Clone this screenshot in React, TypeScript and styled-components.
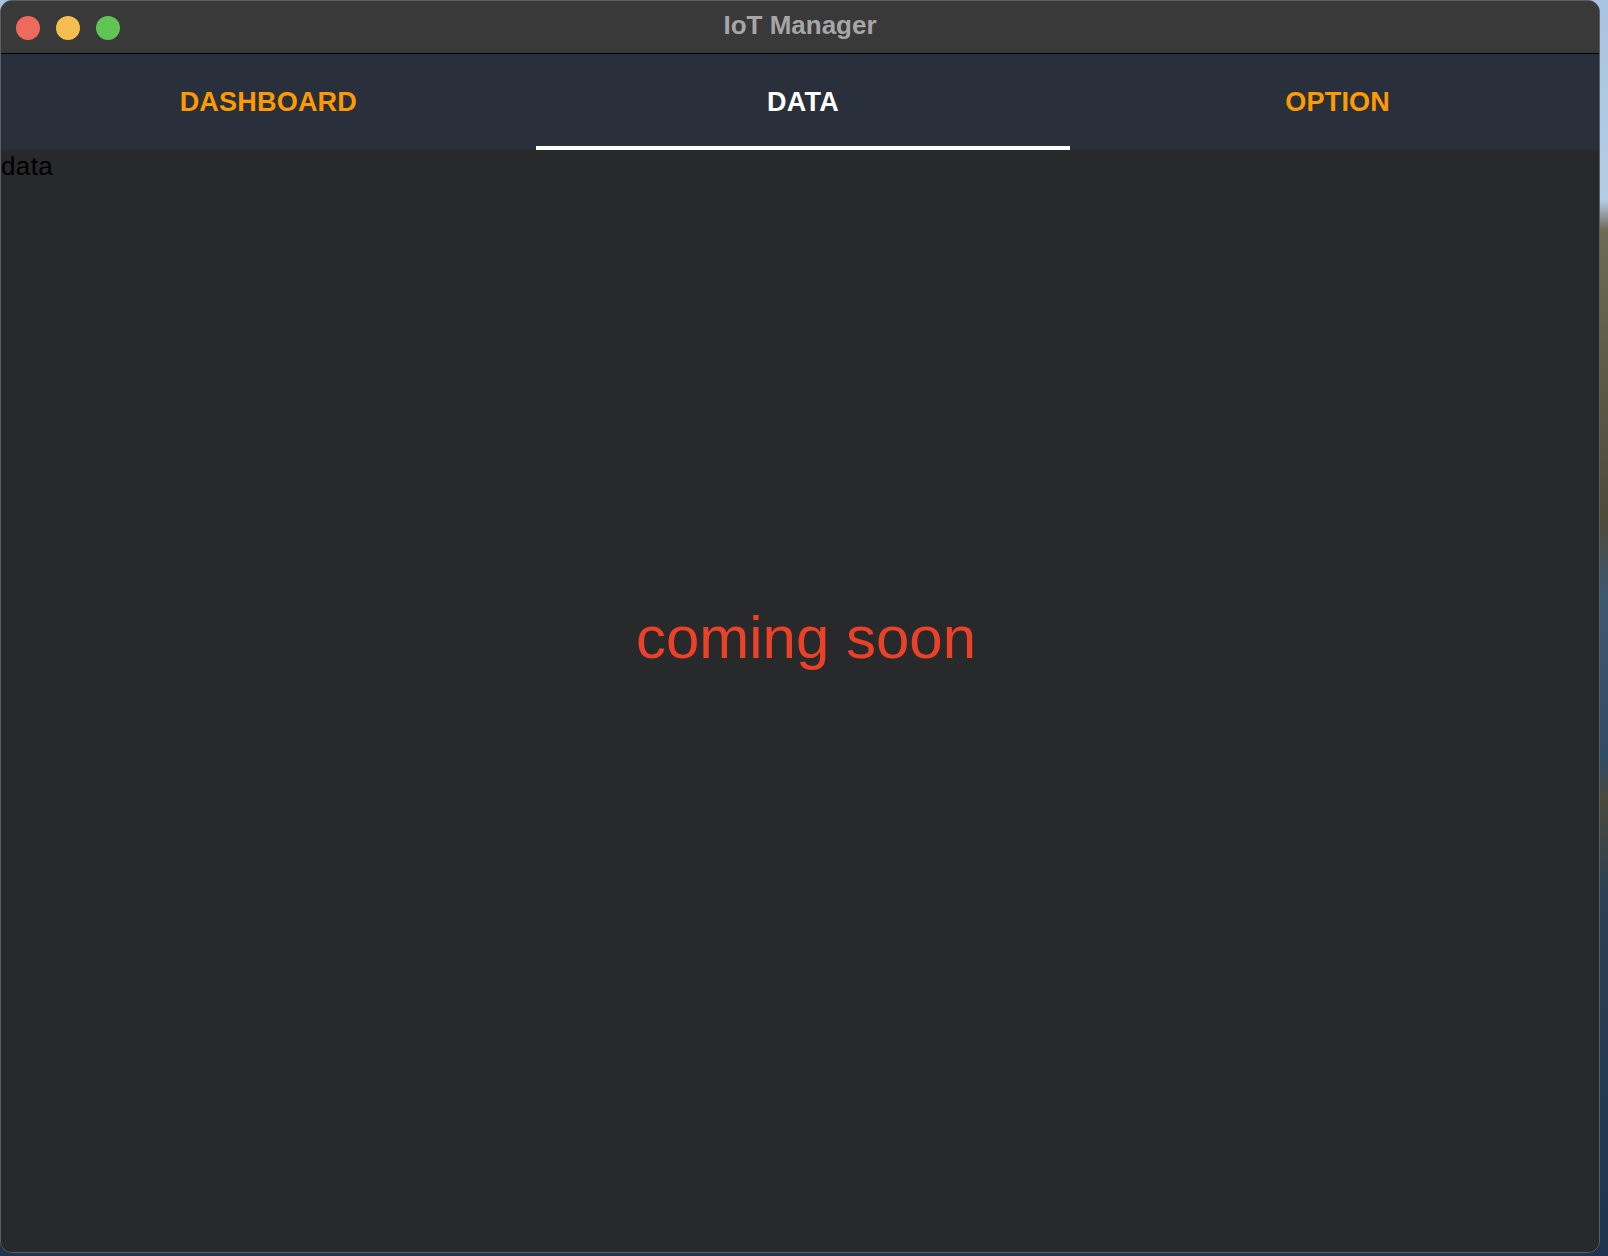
import React from "react";
import styled, { createGlobalStyle } from "styled-components";

const GlobalStyle = createGlobalStyle`
  html, body {
    margin: 0;
    padding: 0;
    width: 1608px;
    height: 1256px;
    overflow: hidden;
  }
  body {
    background: linear-gradient(
      180deg,
      #a7c3e2 0px,
      #b4cde6 200px,
      #6f6a55 230px,
      #4d4a3a 520px,
      #3c5873 600px,
      #2f4b66 760px,
      #4a4a3a 800px,
      #2b3f57 900px,
      #1d3350 1256px
    );
    font-family: "Liberation Sans", Arial, sans-serif;
  }
`;

const Window = styled.div`
  box-sizing: border-box;
  width: 1600px;
  height: 1253px;
  border: 1px solid #5e5e60;
  border-radius: 12px;
  overflow: hidden;
  display: flex;
  flex-direction: column;
  background: #28292b;
`;

const TitleBar = styled.div`
  height: 52px;
  flex: none;
  display: grid;
  grid-template-columns: 1fr auto 1fr;
  align-items: center;
  background: #393939;
  border-bottom: 1px solid #000;
`;

const Lights = styled.div`
  display: flex;
  gap: 16px;
  padding-left: 15px;
  padding-top: 1px;
`;

const Light = styled.span<{ $color: string }>`
  width: 24px;
  height: 24px;
  border-radius: 50%;
  background: ${(p) => p.$color};
`;

const Title = styled.div`
  font-family: "Liberation Sans", Arial, sans-serif;
  font-weight: 700;
  font-size: 26px;
  color: #a6a6a6;
  margin-top: -3px;
`;

const TabBar = styled.div`
  height: 96px;
  flex: none;
  margin-right: -6px;
  display: grid;
  grid-template-columns: repeat(3, 1fr);
  background: #29303b;
`;

const Tab = styled.div<{ $active?: boolean }>`
  display: flex;
  align-items: center;
  justify-content: center;
  font-family: "Liberation Sans", Arial, sans-serif;
  font-weight: 700;
  font-size: 27px;
  letter-spacing: 0.2px;
  color: ${(p) => (p.$active ? "#ffffff" : "#ff9a00")};
  box-shadow: ${(p) => (p.$active ? "inset 0 -4px 0 #ffffff" : "none")};
  cursor: pointer;
`;

const Content = styled.div`
  flex: 1;
  display: flex;
  flex-direction: column;
  background: #28292b;
`;

const Label = styled.div`
  font-family: "Liberation Sans", Arial, sans-serif;
  font-size: 26px;
  color: #000;
  line-height: 29px;
  padding-top: 2px;
  letter-spacing: 0.4px;
`;

const Center = styled.div`
  flex: 1;
  display: flex;
  align-items: center;
  justify-content: center;
  padding-bottom: 158px;
  padding-left: 12px;
`;

const Soon = styled.div`
  font-family: "Liberation Sans", Arial, sans-serif;
  font-size: 60px;
  color: #ea4128;
`;

export default function App() {
  return (
    <>
      <GlobalStyle />
      <Window>
        <TitleBar>
          <Lights>
            <Light $color="#ee6a5f" />
            <Light $color="#f5be4f" />
            <Light $color="#61c554" />
          </Lights>
          <Title>IoT Manager</Title>
          <div />
        </TitleBar>
        <TabBar>
          <Tab>DASHBOARD</Tab>
          <Tab $active>DATA</Tab>
          <Tab>OPTION</Tab>
        </TabBar>
        <Content>
          <Label>data</Label>
          <Center>
            <Soon>coming soon</Soon>
          </Center>
        </Content>
      </Window>
    </>
  );
}
